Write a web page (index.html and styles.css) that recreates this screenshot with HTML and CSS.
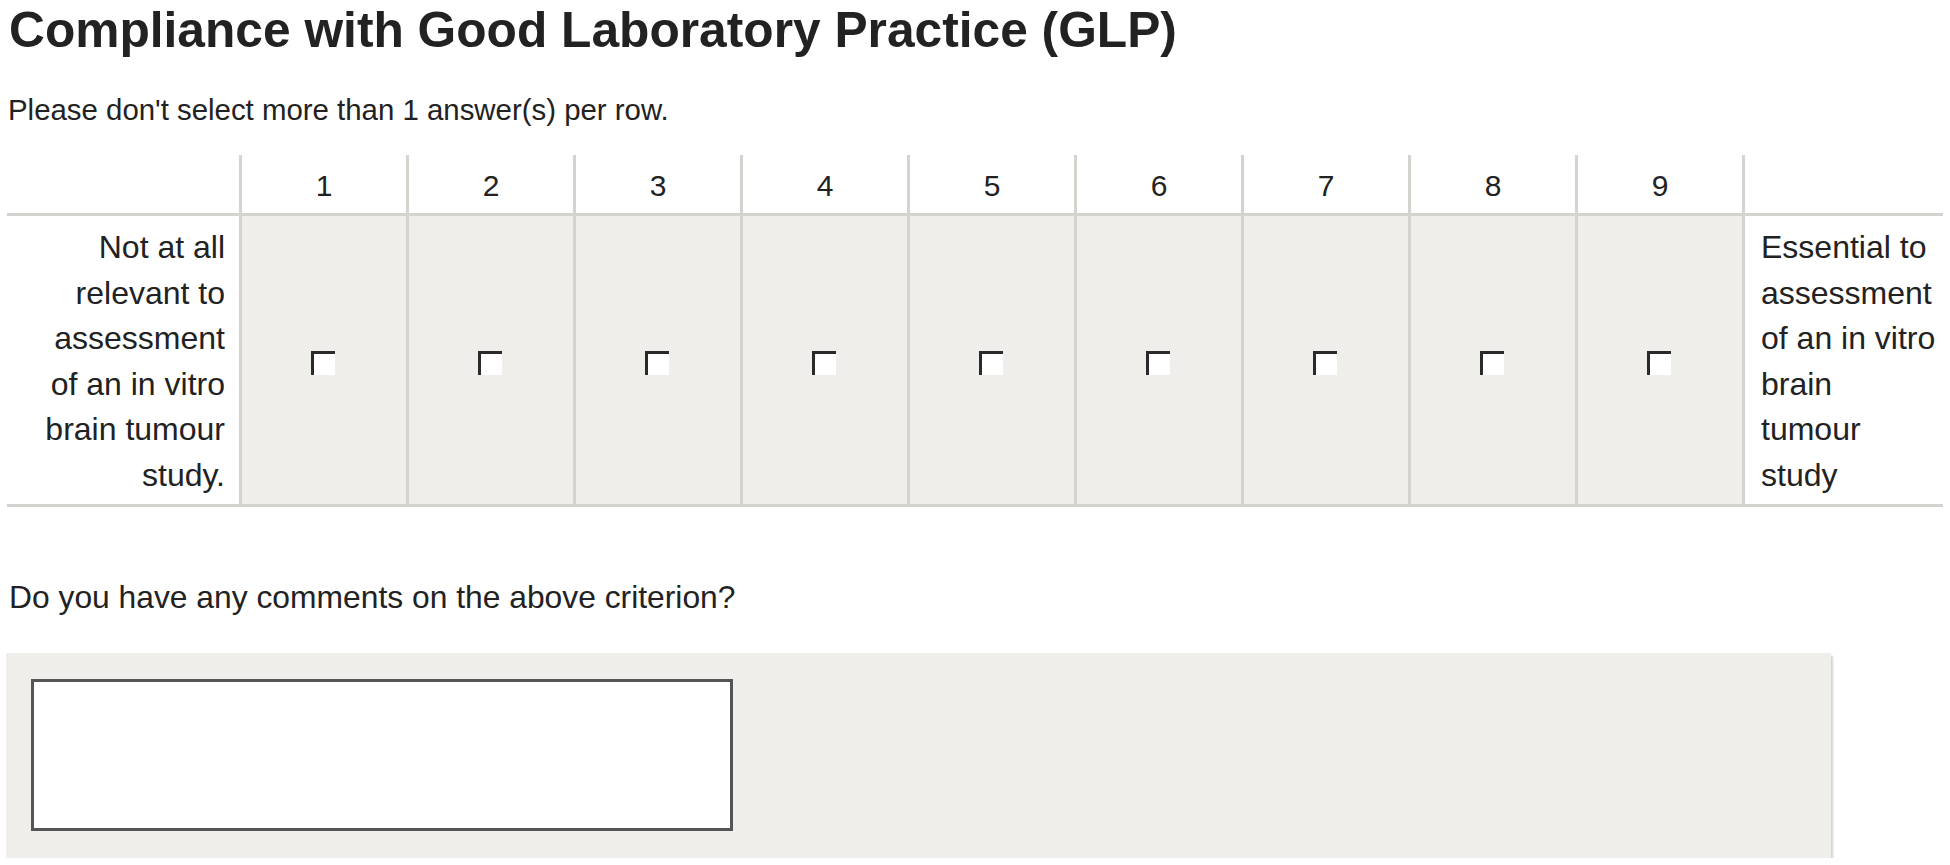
FILE: index.html
```html
<!DOCTYPE html>
<html>
<head>
<meta charset="utf-8">
<link rel="stylesheet" href="styles.css">
</head>
<body>
<div class="page">
  <h1 class="title">Compliance with Good Laboratory Practice (GLP)</h1>
  <p class="note">Please don't select more than 1 answer(s) per row.</p>
  <div class="grid">
    <div class="hcell first"></div>
    <div class="hcell">1</div>
    <div class="hcell">2</div>
    <div class="hcell">3</div>
    <div class="hcell">4</div>
    <div class="hcell">5</div>
    <div class="hcell">6</div>
    <div class="hcell">7</div>
    <div class="hcell">8</div>
    <div class="hcell">9</div>
    <div class="hcell"></div>

    <div class="bcell label-left">Not at all<br>relevant to<br>assessment<br>of an in vitro<br>brain tumour<br>study.</div>
    <div class="bcell opt"><span class="cb"></span></div>
    <div class="bcell opt"><span class="cb"></span></div>
    <div class="bcell opt"><span class="cb"></span></div>
    <div class="bcell opt"><span class="cb"></span></div>
    <div class="bcell opt"><span class="cb"></span></div>
    <div class="bcell opt"><span class="cb"></span></div>
    <div class="bcell opt"><span class="cb"></span></div>
    <div class="bcell opt"><span class="cb"></span></div>
    <div class="bcell opt"><span class="cb"></span></div>
    <div class="bcell label-right">Essential to<br>assessment<br>of an in vitro<br>brain<br>tumour<br>study</div>
  </div>
  <p class="question">Do you have any comments on the above criterion?</p>
  <div class="answer">
    <div class="textbox"></div>
  </div>
</div>
</body>
</html>
```

FILE: styles.css
```css
html, body {
  margin: 0;
  padding: 0;
  background: #ffffff;
}
body {
  font-family: "Liberation Sans", Arial, sans-serif;
  color: #222222;
}
.page {
  padding: 0 7px;
}
.title {
  margin: 0 0 0 2px;
  padding-top: 4px;
  font-size: 49.7px;
  line-height: 52px;
  font-weight: bold;
  color: #222222;
}
.note {
  margin: 39px 0 0 1px;
  font-size: 29.4px;
  line-height: 29px;
}
.grid {
  margin-top: 31px;
  width: 1936px;
  display: grid;
  grid-template-columns: 232px repeat(9, 167px) 201px;
  grid-template-rows: 61px 291px;
}
.hcell {
  box-sizing: border-box;
  border-left: 3px solid #d5d3ce;
  border-bottom: 3px solid #d5d3ce;
  background: #ffffff;
  font-size: 30px;
  line-height: 30px;
  display: flex;
  align-items: center;
  justify-content: center;
  padding-top: 3px;
}
.hcell.first {
  border-left: none;
}
.bcell {
  box-sizing: border-box;
  border-left: 3px solid #d5d3ce;
  border-bottom: 3px solid #d5d3ce;
  background: #f0eeea;
  font-size: 32px;
  line-height: 45.5px;
}
.label-left {
  border-left: none;
  background: #ffffff;
  text-align: right;
  padding: 9px 14px 0 0;
}
.label-right {
  background: #ffffff;
  text-align: left;
  padding: 9px 0 0 16px;
}
.opt {
  display: flex;
  align-items: center;
  justify-content: center;
}
.cb {
  display: block;
  width: 24px;
  height: 24px;
  background: #ffffff;
  border-top: 3px solid #2a2a2a;
  border-left: 3px solid #2a2a2a;
  box-sizing: border-box;
  margin: 6px 0 0 -3px;
}
.question {
  margin: 75px 0 0 2px;
  font-size: 31.8px;
  line-height: 31.5px;
}
.answer {
  margin-top: 39px;
  margin-left: -1px;
  width: 1825px;
  height: 205px;
  box-sizing: border-box;
  background: #f0eeea;
  box-shadow: 2px 3px 2px rgba(0, 0, 0, 0.18);
  padding: 26px 0 0 25px;
}
.textbox {
  width: 702px;
  height: 152px;
  box-sizing: border-box;
  background: #ffffff;
  border: 3px solid #555555;
}
```
